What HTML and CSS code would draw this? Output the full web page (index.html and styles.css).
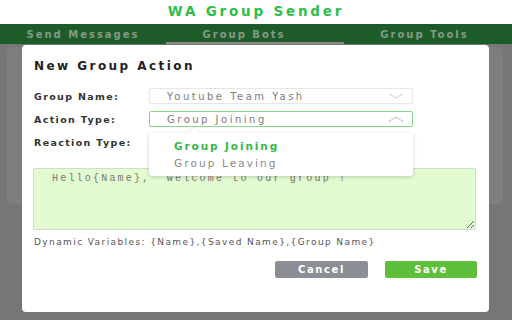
FILE: index.html
```html
<!DOCTYPE html>
<html>
<head>
<meta charset="utf-8">
<link rel="stylesheet" href="styles.css">
</head>
<body>
<header class="header"><h1 class="title">WA Group Sender</h1></header>
<nav class="nav">
  <div class="tab tab-first">Send Messages</div>
  <div class="tab tab-active">Group Bots</div>
  <div class="tab tab-last">Group Tools</div>
</nav>
<main class="stage">
  <div class="bgcard"></div>
  <div class="modal">
    <h2 class="modal-title">New Group Action</h2>
    <div class="row">
      <label class="label">Group Name:</label>
      <div class="select">
        <span class="select-text">Youtube Team Yash</span>
        <svg class="chev" width="16" height="8" viewBox="0 0 16 8"><path d="M1 1.5 L8 6 L15 1.5" fill="none" stroke="#cfcfcf" stroke-width="1"/></svg>
      </div>
    </div>
    <div class="row">
      <label class="label">Action Type:</label>
      <div class="select select-open">
        <span class="select-text">Group Joining</span>
        <svg class="chev" width="16" height="8" viewBox="0 0 16 8"><path d="M1 6.5 L8 2 L15 6.5" fill="none" stroke="#bdbdbd" stroke-width="1"/></svg>
      </div>
    </div>
    <div class="row row-reaction">
      <label class="label">Reaction Type:</label>
    </div>
    <textarea class="message">Hello{Name},  welcome to our group !</textarea>
    <p class="vars">Dynamic Variables: {Name},{Saved Name},{Group Name}</p>
    <div class="actions">
      <button class="btn btn-cancel">Cancel</button>
      <button class="btn btn-save">Save</button>
    </div>
    <div class="dropdown">
      <div class="dd-item dd-selected">Group Joining</div>
      <div class="dd-item">Group Leaving</div>
    </div>
  </div>
</main>
</body>
</html>
```
FILE: styles.css
```css
* { box-sizing: border-box; }
html, body { margin: 0; padding: 0; }
body {
  width: 512px;
  height: 320px;
  overflow: hidden;
  background: #ffffff;
  font-family: "DejaVu Sans", Verdana, sans-serif;
}
.header {
  height: 24px;
  display: flex;
  align-items: center;
  justify-content: center;
}
.title {
  margin: 0;
  font-size: 13.5px;
  font-weight: bold;
  color: #2fbd4c;
  letter-spacing: 2.8px;
  line-height: 1;
}
.nav {
  height: 20px;
  background: #1d5c29;
  display: flex;
}
.tab {
  display: flex;
  align-items: center;
  justify-content: center;
  font-size: 10px;
  font-weight: bold;
  color: #859a86;
  letter-spacing: 2px;
  padding-top: 1px;
}
.tab-first { width: 166px; }
.tab-active {
  width: 178px;
  padding-right: 22px;
  border-bottom: 2px solid #8a8a8a;
  padding-top: 3px;
}
.tab-last { width: 168px; padding-right: 7px; }
.stage {
  position: relative;
  height: 276px;
  background: #767676;
  padding: 3px 9px 0 7px;
}
.bgcard {
  height: 157px;
  background: #7e7e7e;
  border-radius: 5px;
}
.modal {
  position: absolute;
  left: 22px;
  top: 1px;
  width: 467px;
  height: 267px;
  background: #ffffff;
  border-radius: 4px;
  padding: 14px 12px 0 12px;
  display: flex;
  flex-direction: column;
}
.modal-title {
  margin: 0 0 15px 0;
  font-size: 12px;
  font-weight: bold;
  color: #222;
  letter-spacing: 2.45px;
  line-height: 14px;
}
.row {
  display: flex;
  align-items: center;
  height: 16px;
  margin-bottom: 7px;
}
.label {
  width: 115px;
  font-size: 9.5px;
  font-weight: bold;
  color: #333;
  letter-spacing: 1.35px;
}
.select {
  width: 264px;
  height: 16px;
  border: 1px solid #e6e6e6;
  border-radius: 2px;
  display: flex;
  align-items: center;
  justify-content: space-between;
  padding: 0 8px 0 17px;
}
.select-open { border-color: #86d889; }
.select-text {
  font-size: 10px;
  color: #7a7a7a;
  letter-spacing: 2.5px;
}
.chev { display: block; }
.row-reaction { margin-bottom: 18px; }
.message {
  display: block;
  width: 443px;
  height: 62px;
  margin: 0 0 0 -1px;
  background: #e3fbd0;
  border: 1px solid #d3dccb;
  border-radius: 2px;
  padding: 4px 18px;
  font-family: "Liberation Mono", "Courier New", monospace;
  font-size: 10px;
  letter-spacing: 2.2px;
  color: #777;
  resize: vertical;
  line-height: 12px;
  outline: none;
}
.vars {
  margin: 7px 0 0 0;
  font-size: 9px;
  color: #555;
  letter-spacing: 1.4px;
  line-height: 11px;
}
.actions {
  display: flex;
  justify-content: flex-end;
  gap: 17px;
  margin-top: 13px;
}
.btn {
  height: 17px;
  border: none;
  border-radius: 2px;
  color: #fff;
  font-family: "DejaVu Sans", Verdana, sans-serif;
  font-size: 10px;
  font-weight: bold;
  letter-spacing: 1.6px;
  padding: 0;
}
.btn-cancel { width: 93px; background: #8b8e94; }
.btn-save { width: 92px; background: #5ec03a; }
.dropdown {
  position: absolute;
  left: 127px;
  top: 88px;
  width: 264px;
  height: 43px;
  background: #fff;
  border-radius: 3px;
  box-shadow: 0 1px 4px rgba(0,0,0,0.18);
  padding-top: 5px;
}
.dropdown::before {
  content: "";
  position: absolute;
  left: 42px;
  top: -4px;
  width: 7px;
  height: 7px;
  background: #fff;
  transform: rotate(45deg);
  box-shadow: -1px -1px 2px rgba(0,0,0,0.08);
}
.dd-item {
  position: relative;
  height: 17px;
  line-height: 17px;
  padding-left: 25px;
  font-size: 10.5px;
  color: #8a8a8a;
  letter-spacing: 2.1px;
}
.dd-selected {
  color: #35b84a;
  font-weight: bold;
  letter-spacing: 1.9px;
}
```
